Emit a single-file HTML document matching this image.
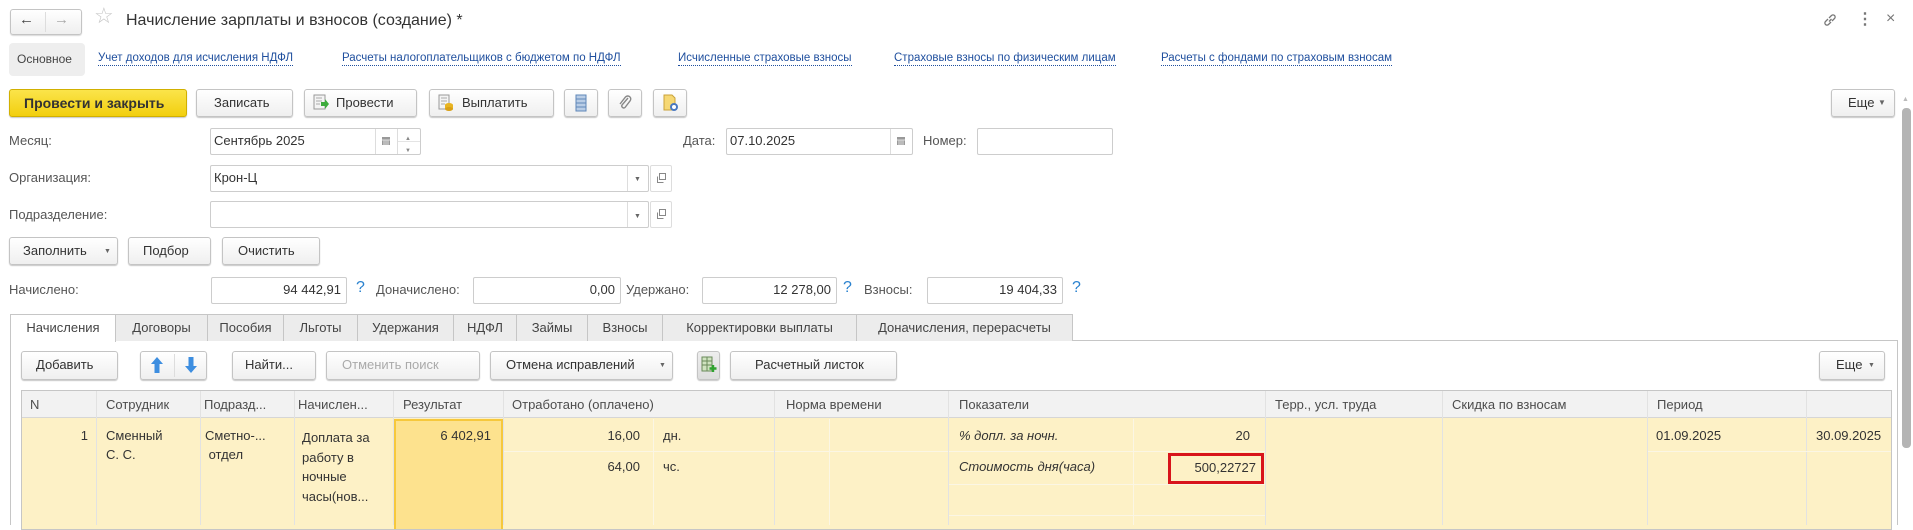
<!DOCTYPE html>
<html><head><meta charset="utf-8">
<style>
*{box-sizing:border-box;margin:0;padding:0}
body{width:1913px;height:525px;overflow:hidden;background:#fff;font-family:"Liberation Sans",Arial,sans-serif;font-size:13px;color:#333;position:relative}
.a{position:absolute;white-space:nowrap;line-height:16px}
.r{text-align:right}
.b{position:absolute;border:1px solid #c4c4c4;border-radius:3px;background:linear-gradient(#fff,#efefef);box-shadow:0 1px 1px rgba(0,0,0,.22)}
.i{position:absolute;border:1px solid #cdcdcd;background:#fff;border-radius:2px}
.lbl{color:#555}
.lnk{color:#1f4f9e;border-bottom:1px dotted #1f4f9e;line-height:14px}
.q{color:#2a82cf;font-size:16px}
.tab{position:absolute;top:314px;height:27px;background:#ececec;border:1px solid #c6c6c6;border-bottom:none;color:#444;text-align:center;line-height:26px}
.v{position:absolute;width:1px}
.h{position:absolute;height:1px}
</style></head><body>

<div class="b" style="left:10px;top:9px;width:72px;height:26px;box-shadow:0 1px 1px rgba(0,0,0,.15)"></div>
<div class="v" style="left:45px;top:12px;height:20px;background:#ddd"></div>
<div class="a" style="left:19px;top:12px;font-size:15px;color:#444">&#8592;</div>
<div class="a" style="left:54px;top:12px;font-size:15px;color:#aaa">&#8594;</div>
<div class="a" style="left:94px;top:8px;font-size:22px;color:#c6c6c6">&#9734;</div>
<div class="a" style="left:126px;top:11px;font-size:16px;line-height:20px;color:#333">Начисление зарплаты и взносов (создание) *</div>
<svg style="position:absolute;left:1822px;top:12px" width="16" height="16" viewBox="0 0 16 16" fill="none" stroke="#777" stroke-width="1.3"><path d="M7 9.5 L9.5 7"/><path d="M6 7 L3.5 9.5 a2 2 0 0 0 3 3 L9 10"/><path d="M10 9 L12.5 6.5 a2 2 0 0 0 -3 -3 L7 6"/></svg>
<div class="a" style="left:1857px;top:12px;font-size:16px;color:#777;font-weight:bold">&#8942;</div>
<div class="a" style="left:1886px;top:11px;font-size:16px;color:#777">&#215;</div>

<div style="position:absolute;left:9px;top:43px;width:76px;height:33px;background:#eeeeee;border-radius:4px"></div>
<div class="a" style="left:17px;top:51px;color:#444;font-size:12px">Основное</div>
<div class="a lnk" style="left:98px;top:51px;font-size:11.5px">Учет доходов для исчисления НДФЛ</div>
<div class="a lnk" style="left:342px;top:51px;font-size:11.5px">Расчеты налогоплательщиков с бюджетом по НДФЛ</div>
<div class="a lnk" style="left:678px;top:51px;font-size:11.5px">Исчисленные страховые взносы</div>
<div class="a lnk" style="left:894px;top:51px;font-size:11.5px">Страховые взносы по физическим лицам</div>
<div class="a lnk" style="left:1161px;top:51px;font-size:11.5px">Расчеты с фондами по страховым взносам</div>

<div class="b" style="left:9px;top:89px;width:178px;height:28px;background:linear-gradient(#fbe44a,#f2cf0f);border-color:#d1b000"></div>
<div class="a" style="left:24px;top:95px;font-weight:bold;color:#333;font-size:14px">Провести и закрыть</div>
<div class="b" style="left:196px;top:89px;width:97px;height:28px"></div>
<div class="a" style="left:214px;top:95px">Записать</div>
<div class="b" style="left:304px;top:89px;width:113px;height:28px"></div>
<svg style="position:absolute;left:312px;top:94px" width="18" height="18" viewBox="0 0 18 18"><rect x="2" y="1" width="11" height="14" fill="#f4f4f4" stroke="#999"/><path d="M4 4h6M4 7h6M4 10h4" stroke="#aaa"/><path d="M9 8h4V5l4 5-4 5v-3H9z" fill="#3cab3c"/></svg>
<div class="a" style="left:336px;top:95px">Провести</div>
<div class="b" style="left:429px;top:89px;width:125px;height:28px"></div>
<svg style="position:absolute;left:437px;top:94px" width="18" height="18" viewBox="0 0 18 18"><rect x="2" y="1" width="10" height="14" fill="#f4f4f4" stroke="#999"/><path d="M4 4h6M4 7h6M4 10h4" stroke="#aaa"/><ellipse cx="12" cy="11" rx="4" ry="2" fill="#e8b422"/><rect x="8" y="11" width="8" height="4" fill="#e8b422"/><ellipse cx="12" cy="15" rx="4" ry="2" fill="#d9a016"/></svg>
<div class="a" style="left:462px;top:95px">Выплатить</div>
<div class="b" style="left:564px;top:89px;width:34px;height:28px"></div>
<svg style="position:absolute;left:574px;top:94px" width="14" height="18" viewBox="0 0 14 18"><rect x="2" y="1" width="10" height="16" fill="#b9cde6" stroke="#5f87b8"/><path d="M2 5h10M2 9h10M2 13h10" stroke="#5f87b8"/></svg>
<div class="b" style="left:608px;top:89px;width:34px;height:28px"></div>
<svg style="position:absolute;left:617px;top:94px" width="16" height="18" viewBox="0 0 16 18" fill="none" stroke="#888" stroke-width="1.4"><path d="M11 4 L5 11 a2 2 0 0 0 3 2.5 L13 7 a3 3 0 0 0 -4.5 -4 L3 10"/></svg>
<div class="b" style="left:653px;top:89px;width:34px;height:28px"></div>
<svg style="position:absolute;left:662px;top:94px" width="18" height="18" viewBox="0 0 18 18"><path d="M2 1h8l3 3v12H2z" fill="#f6d874" stroke="#c9a23a"/><circle cx="12" cy="13" r="4" fill="#4a78c0"/><circle cx="12" cy="13" r="2" fill="#fff"/></svg>
<div class="b" style="left:1831px;top:89px;width:64px;height:28px"></div>
<div class="a" style="left:1848px;top:95px">Еще</div>
<div class="a" style="left:1878px;top:95px;font-size:8px;color:#666">&#9660;</div>
<div class="a" style="left:1902px;top:92px;font-size:7px;color:#bbb">&#9650;</div>
<div style="position:absolute;left:1902px;top:108px;width:9px;height:340px;background:#b4b4b4;border-radius:4px"></div>

<div class="a lbl" style="left:9px;top:133px">Месяц:</div>
<div class="i" style="left:210px;top:128px;width:211px;height:27px"></div>
<div class="v" style="left:375px;top:129px;height:25px;background:#ddd"></div>
<div class="v" style="left:397px;top:129px;height:25px;background:#ddd"></div>
<div class="a" style="left:214px;top:133px">Сентябрь 2025</div>
<svg style="position:absolute;left:381px;top:136px" width="10" height="10"><rect x="1" y="1" width="8" height="8" fill="#999"/><path d="M1 4h8M3 4v5M5 4v5M7 4v5" stroke="#ddd"/></svg>
<div class="a" style="left:405px;top:131px;font-size:6px;color:#888">&#9650;</div>
<div class="a" style="left:405px;top:143px;font-size:6px;color:#888">&#9660;</div>
<div class="h" style="left:398px;top:141px;width:22px;background:#e4e4e4"></div>

<div class="a lbl" style="left:683px;top:133px">Дата:</div>
<div class="i" style="left:726px;top:128px;width:187px;height:27px"></div>
<div class="v" style="left:890px;top:129px;height:25px;background:#ddd"></div>
<div class="a" style="left:730px;top:133px">07.10.2025</div>
<svg style="position:absolute;left:896px;top:136px" width="10" height="10"><rect x="1" y="1" width="8" height="8" fill="#999"/><path d="M1 4h8M3 4v5M5 4v5M7 4v5" stroke="#ddd"/></svg>
<div class="a lbl" style="left:923px;top:133px">Номер:</div>
<div class="i" style="left:977px;top:128px;width:136px;height:27px"></div>

<div class="a lbl" style="left:9px;top:170px">Организация:</div>
<div class="i" style="left:210px;top:165px;width:439px;height:27px"></div>
<div class="v" style="left:627px;top:166px;height:25px;background:#ddd"></div>
<div class="a" style="left:214px;top:170px">Крон-Ц</div>
<div class="a" style="left:634px;top:172px;font-size:7px;color:#666">&#9660;</div>
<div class="i" style="left:650px;top:165px;width:22px;height:27px;border-color:#ddd"></div>
<svg style="position:absolute;left:655px;top:172px" width="12" height="12" fill="none" stroke="#888"><rect x="4.5" y="1.5" width="6" height="6"/><path d="M2.5 4.5v6h6"/></svg>

<div class="a lbl" style="left:9px;top:207px">Подразделение:</div>
<div class="i" style="left:210px;top:201px;width:439px;height:27px"></div>
<div class="v" style="left:627px;top:202px;height:25px;background:#ddd"></div>
<div class="a" style="left:634px;top:209px;font-size:7px;color:#666">&#9660;</div>
<div class="i" style="left:650px;top:201px;width:22px;height:27px;border-color:#ddd"></div>
<svg style="position:absolute;left:655px;top:208px" width="12" height="12" fill="none" stroke="#888"><rect x="4.5" y="1.5" width="6" height="6"/><path d="M2.5 4.5v6h6"/></svg>

<div class="b" style="left:9px;top:237px;width:109px;height:28px"></div>
<div class="a" style="left:23px;top:243px">Заполнить</div>
<div class="a" style="left:104px;top:244px;font-size:7px;color:#666">&#9660;</div>
<div class="b" style="left:128px;top:237px;width:83px;height:28px"></div>
<div class="a" style="left:143px;top:243px">Подбор</div>
<div class="b" style="left:222px;top:237px;width:98px;height:28px"></div>
<div class="a" style="left:238px;top:243px">Очистить</div>

<div class="a lbl" style="left:9px;top:282px">Начислено:</div>
<div class="i" style="left:211px;top:277px;width:136px;height:27px"></div>
<div class="a r" style="left:211px;width:130px;top:282px">94 442,91</div>
<div class="a q" style="left:356px;top:280px">?</div>
<div class="a lbl" style="left:376px;top:282px">Доначислено:</div>
<div class="i" style="left:473px;top:277px;width:148px;height:27px"></div>
<div class="a r" style="left:473px;width:142px;top:282px">0,00</div>
<div class="a lbl" style="left:626px;top:282px">Удержано:</div>
<div class="i" style="left:702px;top:277px;width:135px;height:27px"></div>
<div class="a r" style="left:702px;width:129px;top:282px">12 278,00</div>
<div class="a q" style="left:843px;top:280px">?</div>
<div class="a lbl" style="left:864px;top:282px">Взносы:</div>
<div class="i" style="left:927px;top:277px;width:136px;height:27px"></div>
<div class="a r" style="left:927px;width:130px;top:282px">19 404,33</div>
<div class="a q" style="left:1072px;top:280px">?</div>

<div class="h" style="left:10px;top:340px;width:1888px;background:#c6c6c6"></div>
<div class="v" style="left:10px;top:340px;height:185px;background:#c6c6c6"></div>
<div class="v" style="left:1897px;top:340px;height:185px;background:#c6c6c6"></div>
<div class="tab" style="left:10px;width:106px;background:#fff;height:28px">Начисления</div>
<div class="tab" style="left:115px;width:93px">Договоры</div>
<div class="tab" style="left:207px;width:77px">Пособия</div>
<div class="tab" style="left:283px;width:75px">Льготы</div>
<div class="tab" style="left:357px;width:97px">Удержания</div>
<div class="tab" style="left:453px;width:64px">НДФЛ</div>
<div class="tab" style="left:516px;width:72px">Займы</div>
<div class="tab" style="left:587px;width:76px">Взносы</div>
<div class="tab" style="left:662px;width:195px">Корректировки выплаты</div>
<div class="tab" style="left:856px;width:217px">Доначисления, перерасчеты</div>

<div class="b" style="left:21px;top:351px;width:97px;height:29px"></div>
<div class="a" style="left:36px;top:357px">Добавить</div>
<div class="b" style="left:140px;top:351px;width:67px;height:29px"></div>
<div class="v" style="left:174px;top:354px;height:23px;background:#ddd"></div>
<svg style="position:absolute;left:150px;top:356px" width="14" height="18"><path d="M7 1 L13 8 H9.5 V17 H4.5 V8 H1 Z" fill="#3d8ee0"/></svg>
<svg style="position:absolute;left:184px;top:356px" width="14" height="18"><path d="M7 17 L13 10 H9.5 V1 H4.5 V10 H1 Z" fill="#3d8ee0"/></svg>
<div class="b" style="left:232px;top:351px;width:84px;height:29px"></div>
<div class="a" style="left:245px;top:357px">Найти...</div>
<div class="b" style="left:326px;top:351px;width:154px;height:29px"></div>
<div class="a" style="left:342px;top:357px;color:#aaa">Отменить поиск</div>
<div class="b" style="left:490px;top:351px;width:183px;height:29px"></div>
<div class="a" style="left:506px;top:357px">Отмена исправлений</div>
<div class="a" style="left:659px;top:358px;font-size:7px;color:#666">&#9660;</div>
<div class="b" style="left:697px;top:351px;width:23px;height:29px;background:linear-gradient(#eee,#ddd)"></div>
<svg style="position:absolute;left:701px;top:356px" width="16" height="18"><rect x="1" y="1" width="10" height="14" fill="#cfe3c0" stroke="#6a8a5a"/><path d="M1 5h10M1 9h10M6 1v14" stroke="#6a8a5a"/><path d="M12 9v7M8.5 12.5h7" stroke="#2fa32f" stroke-width="2.4"/></svg>
<div class="b" style="left:730px;top:351px;width:167px;height:29px"></div>
<div class="a" style="left:755px;top:357px">Расчетный листок</div>
<div class="b" style="left:1819px;top:351px;width:66px;height:29px"></div>
<div class="a" style="left:1836px;top:357px">Еще</div>
<div class="a" style="left:1868px;top:358px;font-size:7px;color:#666">&#9660;</div>

<div style="position:absolute;left:21px;top:390px;width:1871px;height:140px;border:1px solid #c6c6c6;background:#fdf1c6"></div>
<div style="position:absolute;left:22px;top:391px;width:1869px;height:27px;background:#f2f2f2;border-bottom:1px solid #d6d6d6"></div>
<div class="v" style="left:96px;top:391px;height:134px;background:#e2e2e2"></div>
<div class="v" style="left:200px;top:391px;height:134px;background:#e2e2e2"></div>
<div class="v" style="left:294px;top:391px;height:134px;background:#e2e2e2"></div>
<div class="v" style="left:393px;top:391px;height:134px;background:#e2e2e2"></div>
<div class="v" style="left:503px;top:391px;height:134px;background:#e2e2e2"></div>
<div class="v" style="left:774px;top:391px;height:134px;background:#e2e2e2"></div>
<div class="v" style="left:948px;top:391px;height:134px;background:#e2e2e2"></div>
<div class="v" style="left:1265px;top:391px;height:134px;background:#e2e2e2"></div>
<div class="v" style="left:1442px;top:391px;height:134px;background:#e2e2e2"></div>
<div class="v" style="left:1647px;top:391px;height:134px;background:#e2e2e2"></div>
<div class="v" style="left:1806px;top:391px;height:134px;background:#e2e2e2"></div>
<div class="v" style="left:653px;top:419px;height:106px;background:#fbf6e4"></div>
<div class="v" style="left:829px;top:419px;height:106px;background:#fbf6e4"></div>
<div class="v" style="left:1133px;top:419px;height:106px;background:#fbf6e4"></div>
<div class="h" style="left:504px;top:451px;width:270px;background:#fbf6e4"></div>
<div class="h" style="left:775px;top:451px;width:173px;background:#fbf6e4"></div>
<div class="h" style="left:949px;top:451px;width:316px;background:#fbf6e4"></div>
<div class="h" style="left:949px;top:484px;width:316px;background:#fbf6e4"></div>
<div class="h" style="left:949px;top:515px;width:316px;background:#fbf6e4"></div>
<div class="h" style="left:1648px;top:451px;width:243px;background:#fbf6e4"></div>
<div style="position:absolute;left:394px;top:419px;width:109px;height:110px;background:#fde28e;border:2px solid #f6c83c;border-bottom:none"></div>

<div class="a" style="left:30px;top:397px;color:#4d4d4d">N</div>
<div class="a" style="left:106px;top:397px;color:#4d4d4d">Сотрудник</div>
<div class="a" style="left:204px;top:397px;color:#4d4d4d">Подразд...</div>
<div class="a" style="left:298px;top:397px;color:#4d4d4d">Начислен...</div>
<div class="a" style="left:403px;top:397px;color:#4d4d4d">Результат</div>
<div class="a" style="left:512px;top:397px;color:#4d4d4d">Отработано (оплачено)</div>
<div class="a" style="left:786px;top:397px;color:#4d4d4d">Норма времени</div>
<div class="a" style="left:959px;top:397px;color:#4d4d4d">Показатели</div>
<div class="a" style="left:1275px;top:397px;color:#4d4d4d">Терр., усл. труда</div>
<div class="a" style="left:1452px;top:397px;color:#4d4d4d">Скидка по взносам</div>
<div class="a" style="left:1657px;top:397px;color:#4d4d4d">Период</div>

<div class="a r" style="left:40px;width:48px;top:428px">1</div>
<div class="a" style="left:106px;top:428px">Сменный</div>
<div class="a" style="left:106px;top:447px">С. С.</div>
<div class="a" style="left:205px;top:428px">Сметно-...</div>
<div class="a" style="left:205px;top:447px">&nbsp;отдел</div>
<div class="a" style="left:302px;top:428px;line-height:19.5px">Доплата за<br>работу в<br>ночные<br>часы(нов...</div>
<div class="a r" style="left:400px;width:91px;top:428px">6 402,91</div>
<div class="a r" style="left:510px;width:130px;top:428px">16,00</div>
<div class="a" style="left:663px;top:428px">дн.</div>
<div class="a r" style="left:510px;width:130px;top:459px">64,00</div>
<div class="a" style="left:663px;top:459px">чс.</div>
<div class="a" style="left:959px;top:428px;font-style:italic">% допл. за ночн.</div>
<div class="a r" style="left:1140px;width:110px;top:428px">20</div>
<div class="a" style="left:959px;top:459px;font-style:italic">Стоимость дня(часа)</div>
<div style="position:absolute;left:1168px;top:453px;width:96px;height:31px;border:3px solid #d8141b"></div>
<div class="a r" style="left:1170px;width:86px;top:460px">500,22727</div>
<div class="a" style="left:1656px;top:428px">01.09.2025</div>
<div style="position:absolute;left:1807px;top:420px;width:84px;height:24px;overflow:hidden"><div class="a" style="left:9px;top:8px">30.09.2025</div></div>

</body></html>
